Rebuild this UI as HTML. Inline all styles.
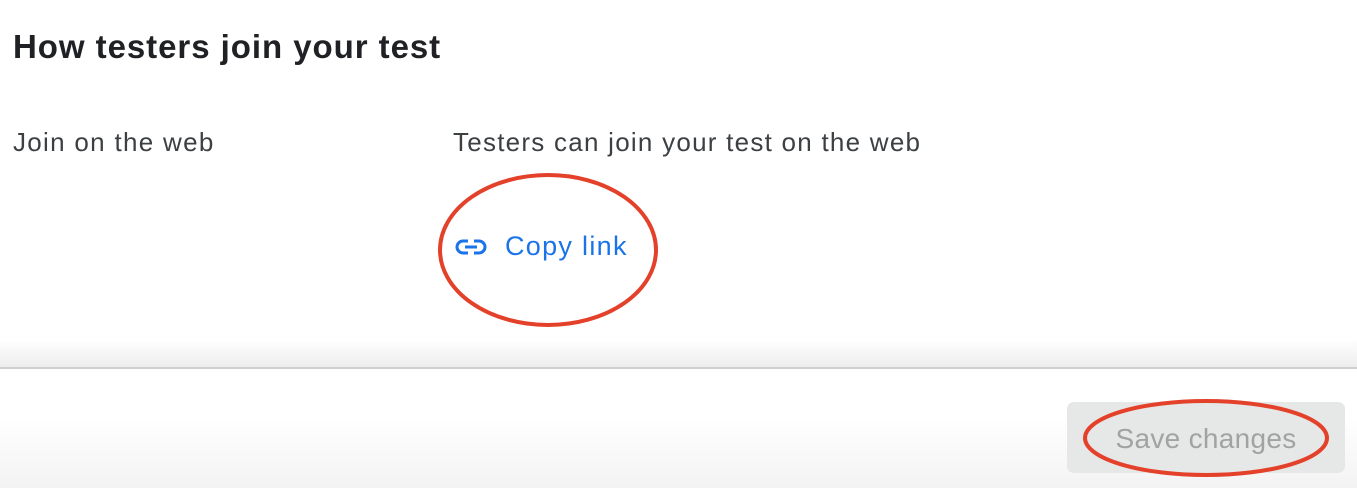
<!DOCTYPE html>
<html><head><style>
body{margin:0;width:1357px;height:488px;position:relative;overflow:hidden;background:#fff;font-family:"Liberation Sans",sans-serif;}
.t{position:absolute;white-space:nowrap;}
</style></head><body>
<div class="t" style="left:13px;top:28px;font-size:33px;font-weight:bold;letter-spacing:0.95px;color:#202124;">How testers join your test</div>
<div class="t" style="left:13px;top:127px;font-size:26px;letter-spacing:1.3px;color:#3c4043;">Join on the web</div>
<div class="t" style="left:453px;top:127px;font-size:26px;letter-spacing:1.25px;color:#3c4043;">Testers can join your test on the web</div>
<svg style="position:absolute;left:455px;top:237px" width="32" height="20" viewBox="0 0 32 20"><g fill="none" stroke="#1a73e8" stroke-width="3"><path d="M13 4H8a6 6 0 0 0 0 12h5"/><path d="M19 4h5a6 6 0 0 1 0 12h-5"/><path d="M10 10h12"/></g></svg>
<div class="t" style="left:505px;top:231px;font-size:27px;letter-spacing:1.3px;color:#1a73e8;">Copy link</div>
<div style="position:absolute;left:0;top:340px;width:1357px;height:28px;background:linear-gradient(#fff,#ececec);"></div>
<div style="position:absolute;left:0;top:367px;width:1357px;height:2px;background:#cfcfcf;"></div>
<div style="position:absolute;left:0;top:369px;width:1357px;height:119px;background:linear-gradient(#fff 40%,#f3f3f3);"></div>
<div style="position:absolute;left:1067px;top:402px;width:278px;height:71px;background:#e6e7e7;border-radius:7px;"></div>
<div class="t" style="left:1067px;width:278px;text-align:center;top:423px;font-size:28px;letter-spacing:0.3px;color:#a2a2a2;">Save changes</div>
<svg style="position:absolute;left:0;top:0" width="1357" height="488"><g fill="none" stroke="#e4412b" stroke-width="4"><ellipse cx="548" cy="250" rx="108" ry="75"/><ellipse cx="1206" cy="438" rx="121" ry="37"/></g></svg>
</body></html>
